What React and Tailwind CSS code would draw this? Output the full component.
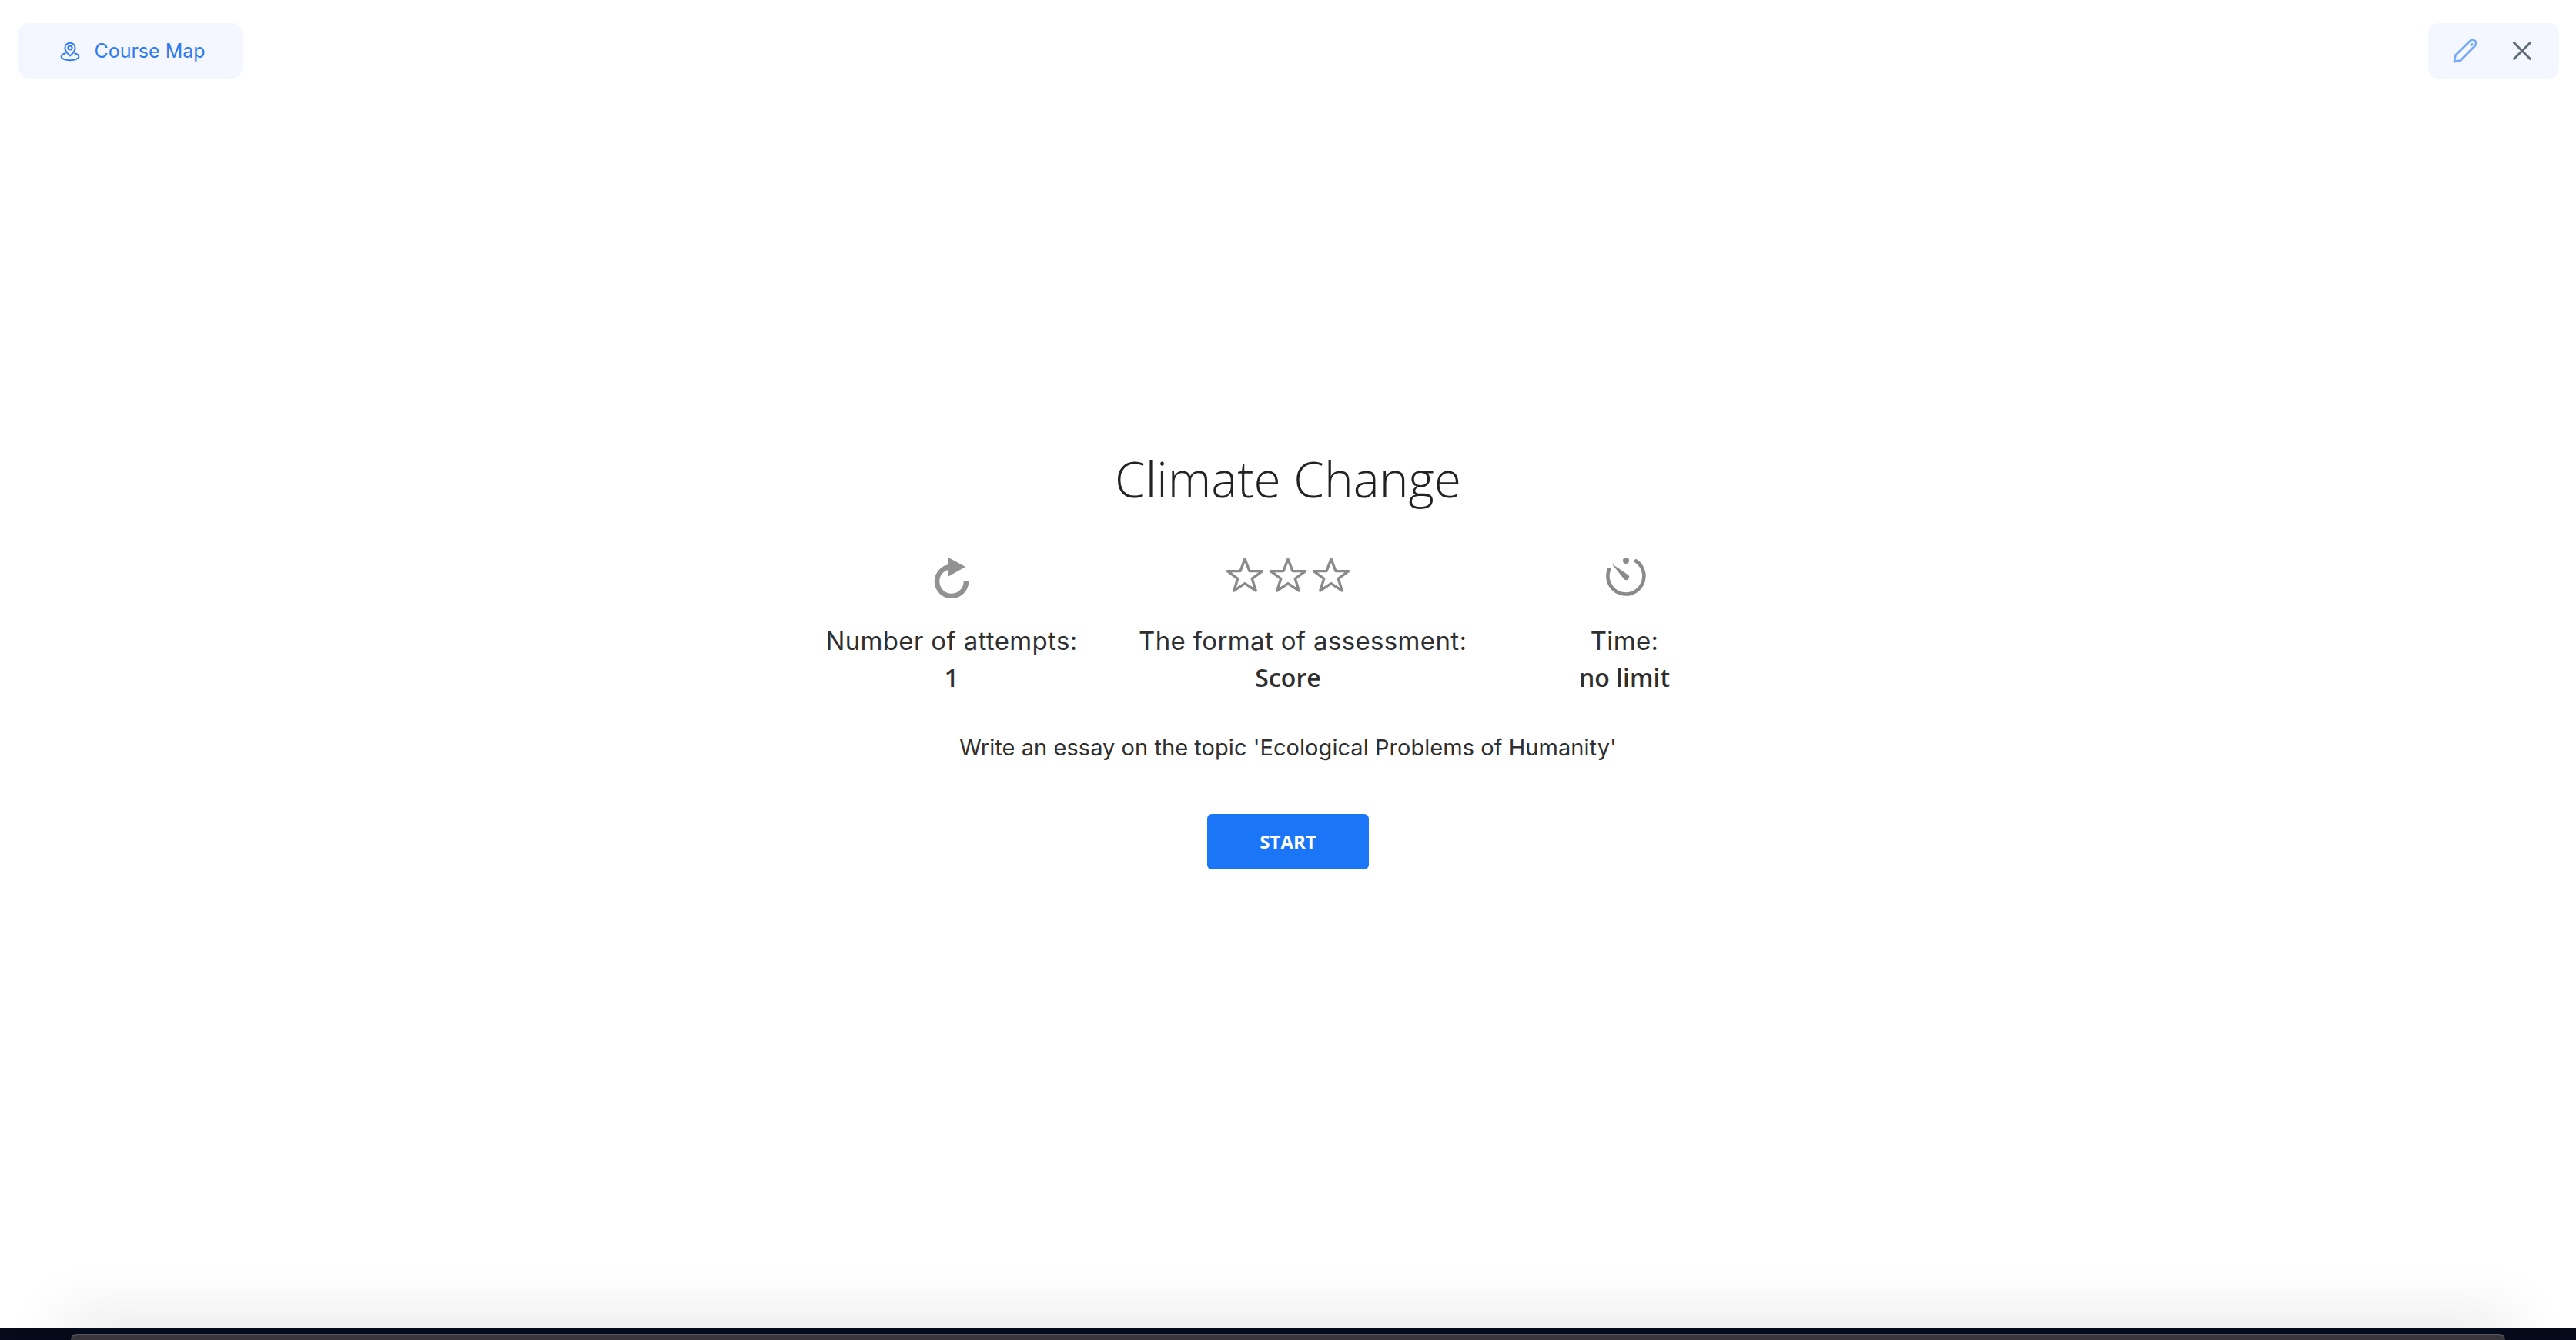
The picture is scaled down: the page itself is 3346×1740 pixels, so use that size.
import React from "react";

const OPEN = "font-['Open_Sans',sans-serif]";
const LABEL = "font-['Inter',sans-serif]";

function PinIcon() {
    return (
        <svg viewBox="0 0 26 28" className="w-[26px] h-[28px] text-[#2f7bf0]" fill="none" stroke="currentColor" strokeWidth="2">
            <path d="M13 20.5c-3-2.6-6.6-5.6-6.6-10.2a6.6 6.6 0 0 1 13.2 0c0 4.6-3.6 7.6-6.6 10.2z" strokeLinejoin="round" />
            <circle cx="13" cy="10" r="2.6" />
            <path d="M6.800 17.200C3.400 18.300 1.600 19.800 1.600 21.600c0 2.600 5 4.600 11.400 4.600s11.400-2 11.400-4.600c0-1.800-1.800-3.300-5.200-4.400" strokeLinecap="round" />
        </svg>
    );
}

function PencilIcon() {
    return (
        <svg viewBox="0 0 34 34" className="w-[34px] h-[34px] text-[#76a9f8]" fill="none" stroke="currentColor" strokeWidth="2.8" strokeLinejoin="round" strokeLinecap="round">
            <path d="M3 31l1.400-8.200L23.600 3.900a4.200 4.200 0 0 1 6 0l.4.4a4.200 4.200 0 0 1 0 6L11 29.600z" />
            <path d="M24.600 9.800l1.600-1.600" />
        </svg>
    );
}

function CloseIcon() {
    return (
        <svg viewBox="0 0 24 24" className="w-[24px] h-[24px] text-[#5f6b76]" fill="none" stroke="currentColor" strokeWidth="3" strokeLinecap="round">
            <path d="M1.500 1.500l21 21M22.500 1.500l-21 21" />
        </svg>
    );
}

function RetryIcon() {
    return (
        <svg viewBox="0 0 48 54" className="w-[48px] h-[54px] text-[#929292]" fill="none">
            <path d="M23 13A19 19 0 1 0 43 32" stroke="currentColor" strokeWidth="6.500" />
            <path d="M20 1l22 12-22 12.500z" fill="currentColor" />
        </svg>
    );
}

function StarIcon() {
    return (
        <svg viewBox="0 0 50 46" className="w-[50px] h-[46px] text-[#8a8a8a]" fill="none" stroke="currentColor" strokeWidth="3.400" strokeLinejoin="round">
            <path d="M25 3l6 15.600h16.600L34.300 28.400 39.200 44 25 34.600 10.800 44 15.700 28.400 2.400 18.600H19z" />
        </svg>
    );
}

function TimerIcon() {
    return (
        <svg viewBox="0 0 54 54" className="w-[54px] h-[54px] ml-[3px] text-[#8a8a8a]" fill="none">
            <path d="M40 5.500A23.500 23.500 0 1 1 5 16.500" stroke="currentColor" strokeWidth="4.600" strokeLinecap="round" />
            <circle cx="27" cy="5" r="4" fill="currentColor" />
            <path d="M8.500 9L30.500 24a4 4 0 0 1-5.500 5.500z" fill="currentColor" />
        </svg>
    );
}

function Stat({ icon, label, value }) {
    return (
        <div className="w-[388px] flex flex-col items-center">
            <div className="h-[56px] flex justify-center gap-[6px]">{icon}</div>
            <div className={`${LABEL} w-full mt-[29px] text-center whitespace-nowrap text-[33px] tracking-[0.35px] leading-[48px] text-[#2f2f2f]`}>{label}</div>
            <div className={`${OPEN} font-semibold text-[32px] leading-[48px] text-[#2f2f2f]`}>{value}</div>
        </div>
    );
}

export default function App() {
    return (
        <div className="h-screen flex flex-col bg-white overflow-hidden">
            {/* top bar */}
            <div className="flex justify-between pt-[30px] pl-[24px] pr-[22px]">
                <button className="w-[291px] h-[72px] flex items-center justify-center gap-[18px] pl-[6px] rounded-[14px] bg-[#f4f7ff]">
                    <PinIcon />
                    <span className={`${LABEL} pt-[2px] text-[25px] text-[#2f7bf0]`}>Course Map</span>
                </button>
                <div className="w-[170px] h-[72px] flex items-center justify-center gap-[45px] pr-[6px] rounded-[14px] bg-[#f4f7ff]">
                    <PencilIcon />
                    <CloseIcon />
                </div>
            </div>

            {/* content */}
            <div className="flex-1 flex flex-col items-center pt-[476px]">
                <h1 className={`${OPEN} font-light text-[64px] leading-[88px] text-[#222222]`}>Climate Change</h1>
                <div className="mt-[57px] flex justify-center gap-[49px]">
                    <Stat icon={<RetryIcon />} label="Number of attempts:" value="1" />
                    <Stat icon={<><StarIcon /><StarIcon /><StarIcon /></>} label="The format of assessment:" value="Score" />
                    <Stat icon={<TimerIcon />} label="Time:" value="no limit" />
                </div>
                <p className={`${LABEL} mt-[45px] text-[29px] tracking-[0.05px] leading-[44px] text-[#2f2f2f]`}>Write an essay on the topic 'Ecological Problems of Humanity'</p>
                <button className={`${OPEN} mt-[64px] w-[210px] h-[72px] rounded-[6px] bg-[#1a76f7] text-white font-bold text-[24px]`}>START</button>
            </div>

            {/* desktop strip below the window */}
            <div className="h-[15px] shrink-0 pt-[7px] px-[92px] bg-[#060b1c]">
                <div className="h-[8px] rounded-t-[12px] border-t-2 border-[#5a575c] bg-[#3a363d] shadow-[0_0_80px_16px_rgba(0,0,0,0.14)]"></div>
            </div>
        </div>
    );
}
